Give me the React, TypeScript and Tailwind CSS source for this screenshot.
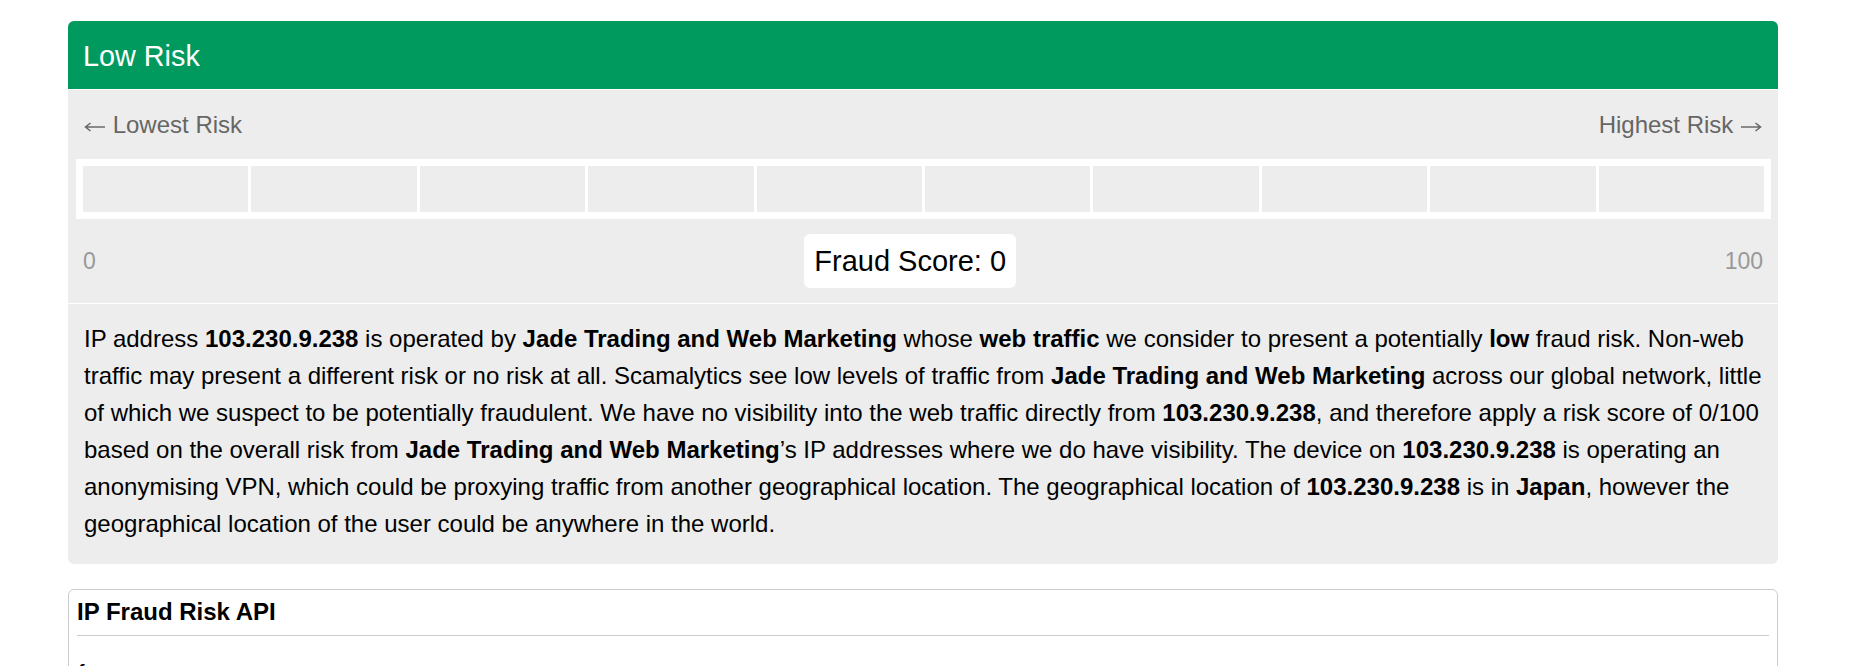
import React from 'react';

const FONT = "font-['Liberation_Sans',Arial,sans-serif]";

const IP = '103.230.9.238';
const ISP = 'Jade Trading and Web Marketing';

// thin line arrow used on the scale labels
const Arrow: React.FC<{ dir: 'left' | 'right' }> = ({ dir }) => (
  <svg width="22" height="10" viewBox="0 0 22 10" className="inline-block align-[1px]">
    {dir === 'left' ? (
      <path d="M1 5H21M6.5 1L1.5 5L6.5 9" fill="none" stroke="#6a6a6a" strokeWidth="1.6" />
    ) : (
      <path d="M1 5H21M15.5 1L20.5 5L15.5 9" fill="none" stroke="#6a6a6a" strokeWidth="1.6" />
    )}
  </svg>
);

const RiskBar: React.FC<{ segments: number }> = ({ segments }) => (
  <div className="ml-2 mr-[7px] bg-white p-[7px]">
    <div className="grid grid-cols-10 gap-[3px]">
      {Array.from({ length: segments }).map((_, i) => (
        <div key={i} className="h-[46px] bg-[#ededed]" />
      ))}
    </div>
  </div>
);

const apiLines = ['{', '  "scamalytics": {', '    "status": "ok",', '    "ip": "103.230.9.238",'];

export default function App() {
  return (
    <div className={`${FONT} min-h-screen bg-white pt-[21px] text-black`}>
      {/* score card */}
      <div className="ml-[68px] w-[1710px] overflow-hidden rounded-md bg-[#ededed]">
        <div className="flex h-[69px] items-center border-b border-white bg-[#009a5e] px-[15px] pt-[3px] text-[28.8px] text-white">
          Low Risk
        </div>

        <div className="flex justify-between px-[16px] pt-[21px] text-[24px] leading-[27px] text-[#666]">
          <span>
            <Arrow dir="left" /> Lowest Risk
          </span>
          <span>
            Highest Risk <Arrow dir="right" />
          </span>
        </div>

        <div className="mt-[21px]">
          <RiskBar segments={10} />
        </div>

        <div className="flex items-center justify-between border-b border-white px-[15px] py-[15px]">
          <span className="text-[23px] text-[#999]">0</span>
          <span className="rounded-md bg-white px-[10px] py-[10px] text-[29px] leading-[34px] text-black">
            Fraud Score: 0
          </span>
          <span className="text-[23px] text-[#999]">100</span>
        </div>

        <p className="px-4 pb-[22px] pt-4 text-[24px] leading-[37px]">
          IP address <b>{IP}</b> is operated by <b>{ISP}</b> whose <b>web traffic</b> we consider to present a
          potentially <b>low</b> fraud risk. Non-web traffic may present a different risk or no risk at all.
          Scamalytics see low levels of traffic from <b>{ISP}</b> across our global network, little of which we
          suspect to be potentially fraudulent. We have no visibility into the web traffic directly from{' '}
          <b>{IP}</b>, and therefore apply a risk score of 0/100 based on the overall risk from <b>{ISP}</b>’s IP
          addresses where we do have visibility. The device on <b>{IP}</b> is operating an anonymising VPN, which
          could be proxying traffic from another geographical location. The geographical location of{' '}
          <b>{IP}</b> is in <b>Japan</b>, however the geographical location of the user could be anywhere in the
          world.
        </p>
      </div>

      {/* api card */}
      <div className="ml-[68px] mt-[25px] w-[1710px] rounded-md border border-[#ccc] px-2 pt-2">
        <div className="border-b border-[#ccc] pb-[9px] text-[24px] font-bold leading-[28px]">IP Fraud Risk API</div>
        <pre className={`${FONT} pt-[18px] text-[24px] leading-[37px]`}>{apiLines.join('\n')}</pre>
      </div>
    </div>
  );
}
